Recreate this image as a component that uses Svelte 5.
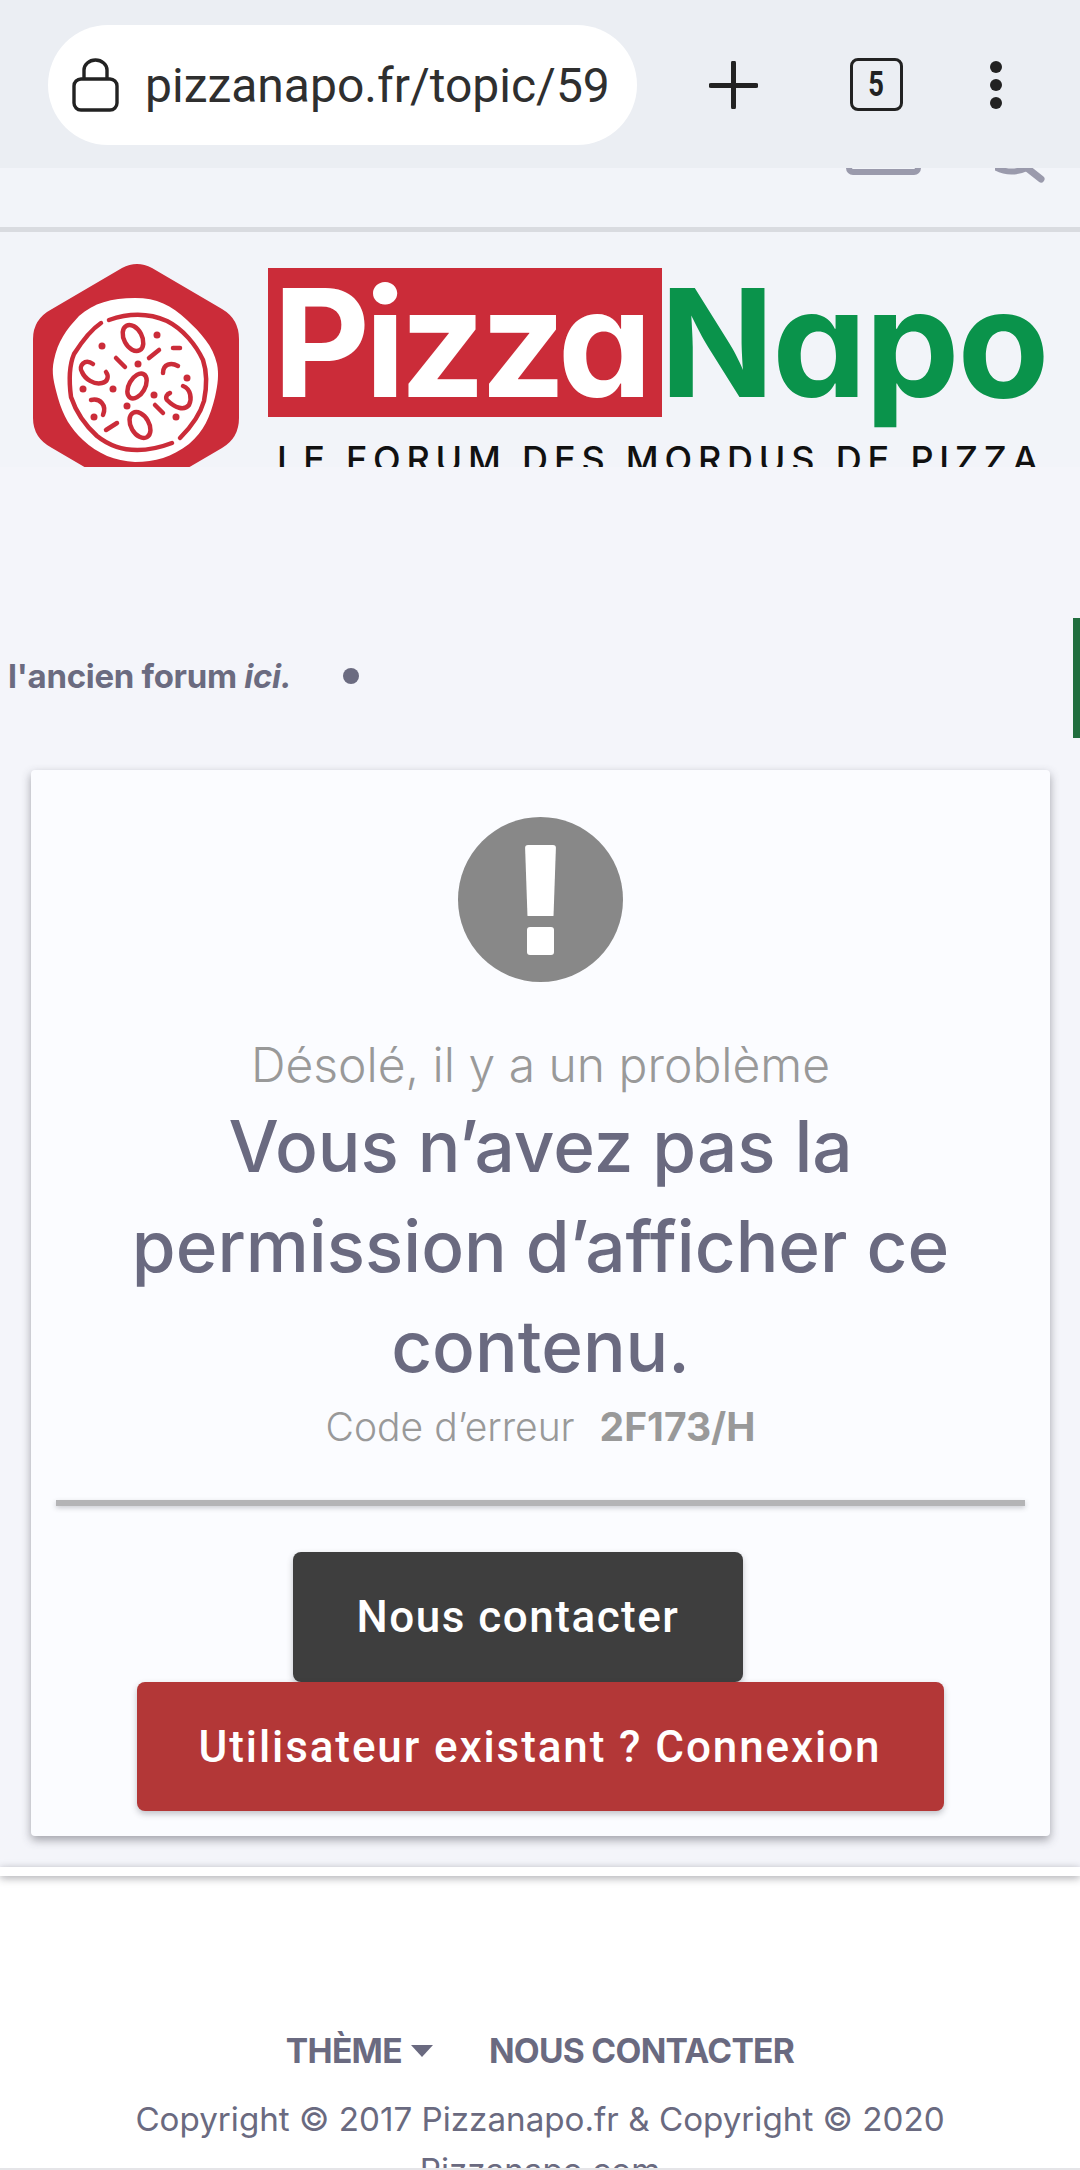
<script>
  const lines = ['Vous n’avez pas la', 'permission d’afficher ce', 'contenu.'];
</script>

<div class="page">
  <header class="chrome">
    <div class="pill">
      <svg class="lock" viewBox="0 0 47 54" fill="none" stroke="#222" stroke-width="3.4">
        <rect x="2" y="21" width="43" height="31" rx="7"/>
        <path d="M12 21V12a11.500 10 0 0 1 23 0v9"/>
      </svg>
      <span class="url">pizzanapo.fr/topic/59</span>
    </div>
    <svg class="plus" viewBox="0 0 49 48"><path d="M24.500 2v44M2 24.500h45" stroke="#222" stroke-width="5" stroke-linecap="round"/></svg>
    <div class="tabs"><span>5</span></div>
    <svg class="menu" viewBox="0 0 14 50" fill="#222"><circle cx="7" cy="7" r="6"/><circle cx="7" cy="25" r="6"/><circle cx="7" cy="43" r="6"/></svg>
  </header>

  <div class="strip">
    <svg class="cut-a" viewBox="0 0 75 7"><path d="M3 -5V0a4 4 0 0 0 4 4h61a4 4 0 0 0 4-4v-5" fill="none" stroke="#9a9aac" stroke-width="6"/></svg>
    <svg class="cut-b" viewBox="0 0 52 16"><path d="M-2-2q16 10 34 2" fill="none" stroke="#9a9aac" stroke-width="6"/><path d="M32 0l14 11" fill="none" stroke="#9a9aac" stroke-width="7" stroke-linecap="round"/></svg>
  </div>

  <div class="logo">
    <svg class="mark" viewBox="33 263 206 204">
      <path d="M122 268q15-8 30 0l70 41q17 10 17 30v79q0 20-17 30l-70 41q-15 8-30 0l-70-41q-19-10-19-30v-79q0-20 19-30z" fill="#cb2c39"/>
      <path d="M135 298c22 0 36 7 52 22 14 13 26 26 30 44 2 10 1 20-2 33-5 20-11 34-26 47-17 13-34 18-54 18-20-1-37-8-52-22-12-11-20-24-25-42-4-15-7-25-4-38 4-19 12-30 25-44 15-13 32-18 56-18z" fill="#fff"/>
      <g fill="none" stroke="#cb2c39" stroke-width="4.500" stroke-linecap="round">
        <path d="M109 320c20-7 40-7 58 1 16 8 29 24 36 39 4 12 4 26 1 41-4 14-14 27-24 37"/>
        <path d="M101 323c-12 8-20 20-27 31-5 12-5 28-3 43 5 15 15 29 26 39 20 16 46 18 75 7"/>
        <ellipse cx="133" cy="338" rx="9" ry="14" transform="rotate(-28 133 338)"/>
        <ellipse cx="137" cy="386" rx="8" ry="13.500" transform="rotate(30 137 386)"/>
        <ellipse cx="140" cy="425" rx="9" ry="14" transform="rotate(-30 140 425)"/>
        <path d="M93 364c-8-6-15 2-11 8 3 7 12 13 20 11 6-1 7-7 4-11"/>
        <path d="M183 386c8 3 9 13 6 19-5 6-14 3-22-5-2-3 0-6 3-7"/>
        <path d="M178 366c-7-4-15-2-15 7"/>
        <path d="M91 400c9-2 16 5 12 15"/>
        <path d="M116 358l9 9"/>
        <path d="M149 358l10-8"/>
        <path d="M173 348h7"/>
        <path d="M155 405l8 8"/>
        <path d="M106 430l11-7"/>
      </g>
      <g fill="#cb2c39">
        <circle cx="157" cy="335" r="3.500"/><circle cx="102" cy="346" r="3.500"/><circle cx="138" cy="364" r="3.500"/>
        <circle cx="187" cy="378" r="3.500"/><circle cx="113" cy="389" r="3.500"/><circle cx="83" cy="389" r="3.500"/>
        <circle cx="154" cy="395" r="3.500"/><circle cx="127" cy="406" r="3.500"/><circle cx="94" cy="417" r="3.500"/><circle cx="176" cy="417" r="3.500"/>
      </g>
    </svg>
    <div class="wordmark">
      <div class="names">
        <div class="pizza">Pizza</div>
        <div class="napo">Napo</div>
      </div>
      <div class="tagline">LE FORUM DES MORDUS DE PIZZA</div>
    </div>
  </div>

  <main>
    <div class="ticker">
      <span class="ticker-text">l'ancien forum <em>ici.</em></span>
      <i class="bullet"></i>
      <i class="green"></i>
    </div>

    <section class="card">
      <div class="alert">
        <i class="bang"></i>
        <i class="point"></i>
      </div>
      <p class="sorry">Désolé, il y a un problème</p>
      <h1>{#each lines as line}<span>{line}</span>{/each}</h1>
      <p class="code">Code d’erreur <b>2F173/H</b></p>
      <hr />
      <div class="actions">
        <button class="dark">Nous contacter</button>
        <button class="red">Utilisateur existant ? Connexion</button>
      </div>
    </section>
  </main>

  <div class="band"></div>

  <footer>
    <nav>
      <span class="theme">THÈME<i class="caret"></i></span>
      <span>NOUS CONTACTER</span>
    </nav>
    <p>Copyright © 2017 Pizzanapo.fr &amp; Copyright © 2020 Pizzanapo.com</p>
  </footer>
  <div class="edge"></div>
</div>

<style>
  :global(body) { margin: 0; background: #fff; }
  .page { width: 1080px; height: 2170px; overflow: hidden; font-family: Inter, sans-serif; position: relative; }
  .chrome { height: 168px; background: #ebeef3; display: flex; align-items: center; padding-left: 48px; box-sizing: border-box; position: relative; }
  .pill { width: 589px; height: 120px; margin-top: 2px; border-radius: 60px; background: #fff; display: flex; align-items: center; box-sizing: border-box; padding-left: 24px; }
  .lock { width: 47px; height: 54px; }
  .url { font: 400 48px Roboto, sans-serif; color: #2f2f2f; margin-left: 26px; white-space: nowrap; }
  .plus { width: 49px; height: 48px; margin-left: 72px; margin-top: 2px; }
  .tabs { width: 53px; height: 53px; margin-left: 92px; margin-top: 1px; box-sizing: border-box; border: 3.500px solid #222; border-radius: 8px; font: 700 35px/1 Roboto, sans-serif; color: #222; display: flex; align-items: center; justify-content: center; }
  .tabs span { display: block; transform: scaleX(.78); }
  .menu { width: 14px; height: 50px; margin-left: 86px; margin-top: 2px; }
  .strip { height: 64px; box-sizing: border-box; background: #f2f4f9; border-bottom: 5px solid #d9dbe0; display: flex; align-items: flex-start; padding-left: 846px; }
  .cut-a { width: 75px; height: 7px; }
  .cut-b { width: 52px; height: 16px; margin-left: 74px; }
  .logo { height: 235px; background: #f2f4f9; overflow: hidden; display: flex; align-items: flex-start; padding: 31px 0 0 33px; box-sizing: border-box; }
  .mark { width: 206px; height: 204px; flex: none; }
  .wordmark { margin-left: 29px; margin-top: 5px; }
  .names { display: flex; align-items: flex-start; height: 149px; }
  .pizza { width: 394px; height: 149px; background: #cb2c39; color: #fff; box-sizing: border-box; padding-left: 5px; font: 700 150px/149px Inter, sans-serif; font-feature-settings: "cv11"; letter-spacing: -5.500px; white-space: nowrap; overflow: hidden; }
  .napo { margin-left: -2px; color: #0a934b; font: 700 150px/149px Inter, sans-serif; font-feature-settings: "cv11"; letter-spacing: -2px; white-space: nowrap; }
  .tagline { margin: 22px 0 0 9px; font: 500 36px/40px Inter, sans-serif; letter-spacing: 5.800px; color: #111; white-space: nowrap; }
  main { background: #f4f5fa; height: 1400px; padding-top: 151px; box-sizing: border-box; }
  .ticker { height: 120px; display: flex; align-items: center; padding-left: 8px; position: relative; }
  .ticker-text { font: 700 33px Inter, sans-serif; color: #6b6b80; letter-spacing: -.3px; margin-top: -5px; }
  .bullet { width: 16px; height: 16px; margin-top: -4px; border-radius: 50%; background: #6b6b80; margin-left: 52px; }
  .green { position: absolute; right: 0; top: 0; width: 7px; height: 120px; background: #216e3e; }
  .card { margin: 32px 30px 0 31px; height: 1066px; background: #fbfcff; border-radius: 4px; box-shadow: 0 4px 10px rgba(60,60,70,.45); padding-top: 47px; box-sizing: border-box; text-align: center; }
  .alert { width: 165px; height: 165px; margin: 0 auto; border-radius: 50%; background: #888; display: flex; flex-direction: column; align-items: center; padding-top: 28px; box-sizing: border-box; }
  .bang { width: 31px; height: 71px; background: #fff; border-radius: 3px; clip-path: polygon(0 0, 100% 0, 92% 100%, 8% 100%); }
  .point { width: 27px; height: 28px; margin-top: 11px; background: #fff; border-radius: 3px; }
  .sorry { margin: 56px 0 0; font: 300 48px/54px Inter, sans-serif; color: #999; }
  h1 { margin: 4px 0 0; font: 500 71px/100px Inter, sans-serif; color: #6a6a80; }
  h1 span { display: block; }
  .code { margin: 7px 0 0; font: 300 39px/48px Inter, sans-serif; color: #999; }
  .code b { margin-left: 14px; font-weight: 700; }
  hr { margin: 49px 25px 0; height: 6px; border: 0; background: #b4b4b6; box-shadow: 0 2px 5px rgba(60,60,70,.25); }
  .actions { display: flex; flex-direction: column; align-items: center; margin-top: 46px; }
  button { border: 0; font: 500 44px Roboto, sans-serif; color: #fff; border-radius: 8px; height: 130px; box-shadow: 0 3px 6px rgba(60,60,70,.3); }
  .dark { width: 450px; background: #3e3e3e; margin-left: -45px; letter-spacing: 1.500px; }
  .red { width: 807px; background: #b33737; height: 129px; margin-left: -1px; letter-spacing: 1.900px; }
  .band { height: 9px; background: #fff; position: relative; box-shadow: 0 2px 9px rgba(40,40,50,.4); }
  footer { background: #fff; text-align: center; height: 294px; }
  nav { padding-top: 153px; display: flex; justify-content: center; gap: 56px; font: 700 33.600px/44px Inter, sans-serif; letter-spacing: -.7px; color: #6a6a80; }
  .theme { display: inline-flex; align-items: center; }
  .caret { margin-left: 9px; border: 11px solid transparent; border-top: 12px solid #6a6a80; border-bottom: 0; }
  footer p { margin: 21px auto 0; width: 900px; font: 400 33.200px/51px Inter, sans-serif; color: #6a6a80; }
  .edge { position: absolute; left: 0; right: 0; bottom: 0; height: 2px; background: #e5e5e8; }
</style>
